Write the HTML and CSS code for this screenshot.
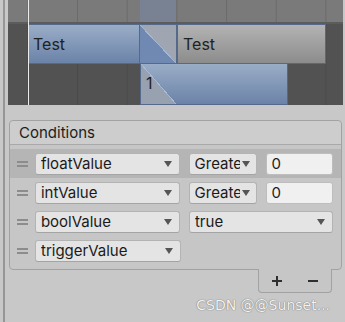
FILE: index.html
```html
<!DOCTYPE html>
<html lang="en">
<head>
<meta charset="utf-8">
<title>Conditions</title>
<link rel="stylesheet" href="styles.css">
</head>
<body>
<div class="window">
  <div class="rail"></div>
  <div class="main">

    <div class="timeline">
      <div class="ruler"><span class="ruler-tint"></span></div>
      <div class="tracks">
        <div class="track">
          <div class="clip clip-blue clip-a">Test</div>
          <div class="blend blend-a"></div>
          <div class="clip clip-gray clip-b">Test</div>
        </div>
        <div class="track">
          <div class="clip clip-blue clip-c">
            <span class="blend blend-c"></span>
            <span class="clip-label">1</span>
          </div>
        </div>
      </div>
      <div class="playhead"></div>
    </div>

    <div class="inspector">
      <div class="conditions">
        <div class="cond-header">Conditions</div>
        <div class="cond-list">
          <div class="cond-row selected">
            <span class="handle"></span>
            <div class="dropdown param"><span class="dd-label">floatValue</span><span class="dd-arrow"></span></div>
            <div class="dropdown mode"><span class="dd-label">Greater</span><span class="dd-arrow"></span></div>
            <div class="field">0</div>
          </div>
          <div class="cond-row">
            <span class="handle"></span>
            <div class="dropdown param"><span class="dd-label">intValue</span><span class="dd-arrow"></span></div>
            <div class="dropdown mode"><span class="dd-label">Greater</span><span class="dd-arrow"></span></div>
            <div class="field">0</div>
          </div>
          <div class="cond-row">
            <span class="handle"></span>
            <div class="dropdown param"><span class="dd-label">boolValue</span><span class="dd-arrow"></span></div>
            <div class="dropdown wide"><span class="dd-label">true</span><span class="dd-arrow"></span></div>
          </div>
          <div class="cond-row">
            <span class="handle"></span>
            <div class="dropdown param"><span class="dd-label">triggerValue</span><span class="dd-arrow"></span></div>
          </div>
        </div>
      </div>
      <div class="cond-footer">
        <span class="btn-icon plus"></span>
        <span class="btn-icon minus"></span>
      </div>
      <div class="watermark">CSDN @@Sunset...</div>
    </div>

  </div>
</div>
</body>
</html>
```

FILE: styles.css
```css
body {
  margin: 0;
  background: #c8c8c8;
  font-family: Inter, "Noto Sans", sans-serif;
  color: #1e1e1e;
}
.window {
  display: flex;
  width: 345px;
  height: 322px;
  overflow: hidden;
}
.rail {
  flex: none;
  width: 2px;
  margin: 0 3px 0 3px;
  background: #969696;
}
.main {
  width: 335px;
}

/* timeline */
.timeline {
  position: relative;
  height: 105px;
  background: #525252;
}
.ruler {
  display: flex;
  height: 22px;
  border-bottom: 2px solid #5c5c5c;
  background-color: #7a7a7a;
  background-image: linear-gradient(to right, transparent 48.7px, #6b6b6b 48.7px);
  background-size: 49.7px 100%;
  background-position: 20.3px 0;
}
.ruler-tint {
  width: 36px;
  margin-left: 132px;
  background: rgba(120, 150, 205, 0.3);
}
.tracks {
  height: 81px;
  background-image: linear-gradient(to right, transparent 48.7px, #4a4a4a 48.7px);
  background-size: 49.7px 100%;
  background-position: 20.3px 0;
}
.track {
  display: flex;
  height: 40px;
}
.track + .track {
  height: 41px;
}
.clip {
  box-sizing: border-box;
  height: 100%;
  padding-left: 5px;
  border: 1px solid #55698a;
  font-size: 16px;
  line-height: 38px;
  color: #222;
}
.clip-blue {
  background: linear-gradient(#9aadc7, #6b83a8);
}
.clip-gray {
  background: linear-gradient(#b3b3b3, #8c8c8c);
}
.clip-a {
  width: 112px;
  margin-left: 20px;
  border-left: none;
}
.blend {
  box-sizing: border-box;
  width: 37px;
  height: 100%;
  border: 1px solid #55698a;
  border-left: none;
}
.blend-a {
  background:
    linear-gradient(to top right, transparent calc(50% - 0.5px), #a3b6d2 calc(50% - 0.5px), #a3b6d2 calc(50% + 0.5px), transparent calc(50% + 0.5px)),
    linear-gradient(to top right, #6f89b2 50%, #a0a6b1 50%);
}
.clip-b {
  width: 149px;
}
.clip-c {
  display: flex;
  width: 148px;
  margin-left: 132px;
  padding-left: 0;
  border-top: none;
  line-height: 39px;
}
.blend-c {
  width: 35px;
  margin-right: -35px;
  border: none;
  background:
    linear-gradient(to top right, transparent calc(50% - 0.5px), #a8bad4 calc(50% - 0.5px), #a8bad4 calc(50% + 0.5px), transparent calc(50% + 0.5px)),
    linear-gradient(to top right, #98a1af 50%, transparent 50%);
}
.clip-label {
  padding-left: 5px;
}
.playhead {
  position: absolute;
  top: 0;
  left: 20px;
  width: 1px;
  height: 105px;
  background: #ececec;
}

/* conditions list */
.inspector {
  padding: 15px 1px 0 1px;
}
.conditions {
  border: 1px solid #a2a2a2;
  border-radius: 4px;
  background: #c6c6c6;
}
.cond-header {
  height: 23px;
  padding-left: 9px;
  border-bottom: 1px solid #a9a9a9;
  border-radius: 4px 4px 0 0;
  background: #cdcdcd;
  font-size: 15px;
  line-height: 23px;
  color: #1c1c1c;
}
.cond-list {
  padding: 4px 0;
}
.cond-row {
  display: flex;
  align-items: center;
  gap: 9px;
  height: 29px;
  padding: 0 8px 0 7px;
}
.cond-row.selected {
  background: #b5b5b5;
}
.handle {
  width: 11px;
  height: 2px;
  margin-right: -2px;
  border-top: 2px solid #8c8c8c;
  border-bottom: 2px solid #8c8c8c;
}
.dropdown {
  box-sizing: border-box;
  display: flex;
  align-items: center;
  height: 22px;
  padding: 0 7px 0 5px;
  border: 1px solid #b3b3b3;
  border-bottom-color: #a4a4a4;
  border-radius: 3px;
  background: #e4e4e4;
  font-size: 15px;
  color: #1a1a1a;
}
.dropdown.param {
  width: 146px;
}
.dropdown.mode {
  width: 68px;
  padding-right: 6px;
}
.dropdown.wide {
  width: 145px;
}
.dd-label {
  flex: 1;
  overflow: hidden;
  white-space: nowrap;
}
.dd-arrow {
  flex: none;
  width: 0;
  height: 0;
  margin-left: 2px;
  border-left: 4px solid transparent;
  border-right: 4px solid transparent;
  border-top: 6px solid #555;
}
.field {
  box-sizing: border-box;
  width: 68px;
  height: 22px;
  padding-left: 5px;
  border: 1px solid #bdbdbd;
  border-radius: 3px;
  background: #f0f0f0;
  font-size: 15px;
  line-height: 20px;
}
.cond-footer {
  display: flex;
  align-items: center;
  justify-content: space-around;
  width: 72px;
  height: 23px;
  margin: -1px 0 0 249px;
  border: 1px solid #a2a2a2;
  border-top: none;
  border-radius: 0 0 4px 4px;
  background: #c6c6c6;
}
.btn-icon {
  position: relative;
  width: 10px;
  height: 10px;
}
.btn-icon::before,
.btn-icon::after {
  content: "";
  position: absolute;
  background: #2e2e2e;
}
.btn-icon::before {
  left: 0;
  top: 4px;
  width: 10px;
  height: 2px;
}
.plus::after {
  left: 4px;
  top: 0;
  width: 2px;
  height: 10px;
}
.watermark {
  margin-top: 4px;
  padding-right: 12px;
  text-align: right;
  font-family: "DejaVu Sans", sans-serif;
  font-size: 14px;
  color: #f2f2f2;
  text-shadow: 0 0 1px #777, 0 0 1px #777;
}
```
